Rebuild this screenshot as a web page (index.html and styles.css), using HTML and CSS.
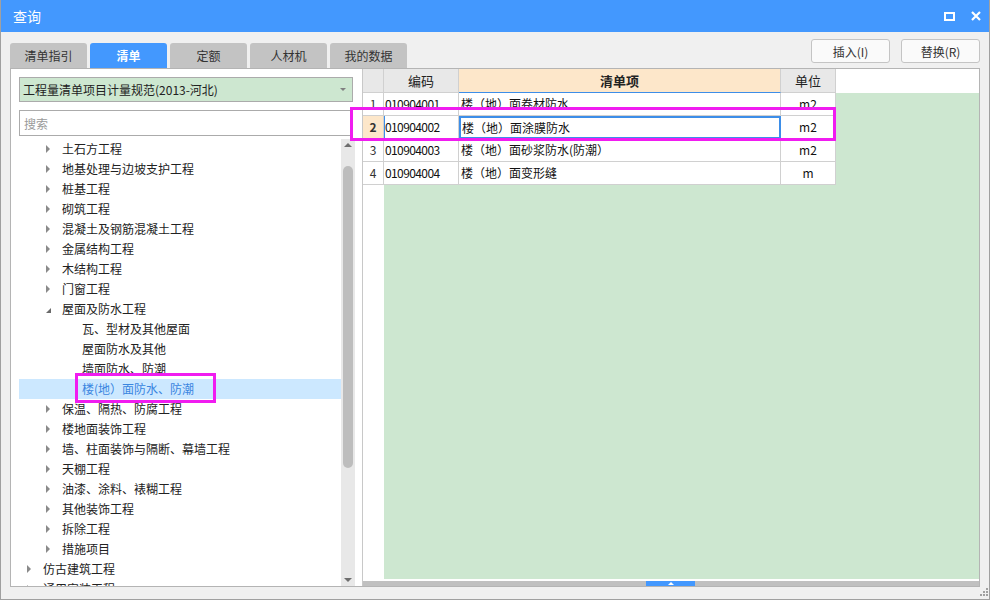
FILE: index.html
```html
<!DOCTYPE html>
<html lang="zh-CN">
<head>
    <meta charset="UTF-8">
    <title>查询</title>
    <link rel="stylesheet" href="styles.css">
</head>
<body>
    <div class="window">
        <div class="titlebar">
            <span class="title">查询</span>
            <div class="win-btns">
                <svg width="11" height="9" viewBox="0 0 11 9"><rect x="1" y="1" width="9" height="7" fill="none" stroke="#fff" stroke-width="2"/></svg>
                <svg width="10" height="10" viewBox="0 0 10 10"><path d="M1 1L9 9M9 1L1 9" stroke="#fff" stroke-width="2.2" fill="none"/></svg>
            </div>
        </div>

        <div class="content">
            <div class="toolbar">
                <div class="tabs">
                    <div class="tab">清单指引</div>
                    <div class="tab active">清单</div>
                    <div class="tab">定额</div>
                    <div class="tab">人材机</div>
                    <div class="tab">我的数据</div>
                </div>
                <div class="actions">
                    <button class="btn">插入(I)</button>
                    <button class="btn">替换(R)</button>
                </div>
            </div>

            <div class="panes">
                <div class="left-pane">
                    <div class="select">
                        <span>工程量清单项目计量规范(2013-河北)</span>
                        <i class="select-arrow"></i>
                    </div>
                    <input class="search" type="text" placeholder="搜索">
                    <div class="tree-box">
                        <ul class="tree">
                            <li class="node lv2"><i class="caret"></i>土石方工程</li>
                            <li class="node lv2"><i class="caret"></i>地基处理与边坡支护工程</li>
                            <li class="node lv2"><i class="caret"></i>桩基工程</li>
                            <li class="node lv2"><i class="caret"></i>砌筑工程</li>
                            <li class="node lv2"><i class="caret"></i>混凝土及钢筋混凝土工程</li>
                            <li class="node lv2"><i class="caret"></i>金属结构工程</li>
                            <li class="node lv2"><i class="caret"></i>木结构工程</li>
                            <li class="node lv2"><i class="caret"></i>门窗工程</li>
                            <li class="node lv2"><i class="caret open"></i>屋面及防水工程</li>
                            <li class="node lv3">瓦、型材及其他屋面</li>
                            <li class="node lv3">屋面防水及其他</li>
                            <li class="node lv3">墙面防水、防潮</li>
                            <li class="node lv3 selected">楼(地）面防水、防潮</li>
                            <li class="node lv2"><i class="caret"></i>保温、隔热、防腐工程</li>
                            <li class="node lv2"><i class="caret"></i>楼地面装饰工程</li>
                            <li class="node lv2"><i class="caret"></i>墙、柱面装饰与隔断、幕墙工程</li>
                            <li class="node lv2"><i class="caret"></i>天棚工程</li>
                            <li class="node lv2"><i class="caret"></i>油漆、涂料、裱糊工程</li>
                            <li class="node lv2"><i class="caret"></i>其他装饰工程</li>
                            <li class="node lv2"><i class="caret"></i>拆除工程</li>
                            <li class="node lv2"><i class="caret"></i>措施项目</li>
                            <li class="node lv1"><i class="caret"></i>仿古建筑工程</li>
                            <li class="node lv1"><i class="caret"></i>通用安装工程</li>
                        </ul>
                        <div class="vscroll">
                            <i class="arr-up"></i>
                            <div class="thumb-v"></div>
                            <i class="arr-down"></i>
                        </div>
                    </div>
                </div>

                <div class="right-pane">
                    <div class="grid-head">
                        <div class="hc w-num"></div>
                        <div class="hc w-code">编码</div>
                        <div class="hc w-name focus">清单项</div>
                        <div class="hc w-unit">单位</div>
                        <div class="head-fill"></div>
                    </div>
                    <div class="grid-body">
                        <div class="num-col">
                            <div class="num">1</div>
                            <div class="num cur">2</div>
                            <div class="num">3</div>
                            <div class="num">4</div>
                        </div>
                        <div class="data-col">
                            <div class="row">
                                <div class="cell w-code code">010904001</div>
                                <div class="cell w-name">楼（地）面卷材防水</div>
                                <div class="cell w-unit unit">m2</div>
                            </div>
                            <div class="row cur">
                                <div class="cell w-code code">010904002</div>
                                <div class="cell w-name">楼（地）面涂膜防水</div>
                                <div class="cell w-unit unit">m2</div>
                            </div>
                            <div class="row">
                                <div class="cell w-code code">010904003</div>
                                <div class="cell w-name">楼（地）面砂浆防水(防潮）</div>
                                <div class="cell w-unit unit">m2</div>
                            </div>
                            <div class="row">
                                <div class="cell w-code code">010904004</div>
                                <div class="cell w-name">楼（地）面变形缝</div>
                                <div class="cell w-unit unit">m</div>
                            </div>
                        </div>
                    </div>
                    <div class="hscroll">
                        <div class="thumb-h"><i></i></div>
                    </div>
                </div>
            </div>
        </div>

        <!-- annotation frames -->
        <div class="mark mark-row"></div>
        <div class="mark mark-tree"></div>

        <svg class="grip" width="8" height="8" viewBox="0 0 8 8">
            <rect x="6" y="0" width="2" height="2"/>
            <rect x="3" y="3" width="2" height="2"/>
            <rect x="6" y="3" width="2" height="2"/>
            <rect x="0" y="6" width="2" height="2"/>
            <rect x="3" y="6" width="2" height="2"/>
            <rect x="6" y="6" width="2" height="2"/>
        </svg>
    </div>
</body>
</html>
```

FILE: styles.css
```css
* {
    box-sizing: border-box;
    margin: 0;
    padding: 0;
}
body {
    font-family: "Noto Sans CJK SC", "Microsoft YaHei", sans-serif;
    font-size: 12px;
    color: #222;
    background-color: #ffffff;
}

.window {
    position: relative;
    width: 990px;
    height: 600px;
    border: 1px solid #a0a0a0;
    border-top: 0;
    background-color: #f0f0f0;
    display: flex;
    flex-direction: column;
}

/* title bar */
.titlebar {
    height: 32px;
    background-color: #4398fe;
    color: #ffffff;
    display: flex;
    align-items: center;
    justify-content: space-between;
    padding: 0 8px 0 12px;
}
.title {
    font-size: 14px;
}
.win-btns {
    display: flex;
    align-items: center;
    gap: 16px;
}
.win-btns svg {
    display: block;
}

.content {
    flex: 1;
    display: flex;
    flex-direction: column;
    padding: 0 9px 12px;
    min-height: 0;
}

/* tabs and buttons */
.toolbar {
    height: 36px;
    display: flex;
    justify-content: space-between;
}
.tabs {
    display: flex;
    align-items: flex-end;
    gap: 3px;
}
.tab {
    width: 77px;
    height: 25px;
    line-height: 25px;
    text-align: center;
    background-color: #c3c3c3;
    border-radius: 3px 3px 0 0;
    color: #333;
}
.tab.active {
    background-color: #4398fe;
    color: #ffffff;
    font-weight: bold;
}
.actions {
    display: flex;
    gap: 11px;
    padding-top: 7px;
}
.btn {
    width: 79px;
    height: 24px;
    border: 1px solid #c4c4c4;
    border-radius: 3px;
    background-color: #fafafa;
    font: inherit;
    color: #333;
}

.panes {
    flex: 1;
    display: flex;
    border: 1px solid #b4b4b4;
    background-color: #ffffff;
    min-height: 0;
}

/* left side */
.left-pane {
    width: 351px;
    display: flex;
    flex-direction: column;
    padding: 8px 7px 0 8px;
}
.select {
    height: 25px;
    margin-right: 2px;
    border: 1px solid #ababab;
    background-color: #cde7d0;
    display: flex;
    align-items: center;
    justify-content: space-between;
    padding: 0 6px 0 3px;
    color: #222;
}
.select-arrow {
    width: 0;
    height: 0;
    border-left: 3px solid transparent;
    border-right: 3px solid transparent;
    border-top: 3px solid #808080;
}
.search {
    height: 26px;
    margin-top: 8px;
    margin-right: 2px;
    border: 1px solid #ababab;
    padding: 0 4px;
    font: inherit;
    outline: none;
}
.search::placeholder {
    color: #9a9a9a;
}
.tree-box {
    flex: 1;
    display: flex;
    margin-top: 3px;
    min-height: 0;
}
.tree {
    flex: 1;
    list-style: none;
    overflow: hidden;
}
.node {
    height: 20px;
    line-height: 20px;
    white-space: nowrap;
    display: flex;
    align-items: center;
    color: #222;
}
.lv1 { padding-left: 8px; }
.lv2 { padding-left: 27px; }
.lv3 { padding-left: 63px; }
.caret {
    width: 0;
    height: 0;
    margin-right: 12px;
    border-top: 4px solid transparent;
    border-bottom: 4px solid transparent;
    border-left: 4px solid #8a8a8a;
}
.caret.open {
    width: 0;
    height: 0;
    margin-right: 11px;
    margin-top: 3px;
    border-top: 5px solid transparent;
    border-bottom: 0;
    border-left: 0;
    border-right: 5px solid #6a6a6a;
}
.node.selected {
    background-color: #cce8ff;
    color: #3a85df;
}
.vscroll {
    width: 14px;
    background-color: #e8e8e8;
    display: flex;
    flex-direction: column;
    align-items: center;
}
.arr-up, .arr-down {
    width: 0;
    height: 0;
    border-left: 4px solid transparent;
    border-right: 4px solid transparent;
}
.arr-up {
    margin-top: 4px;
    border-bottom: 4px solid #6e6e6e;
}
.arr-down {
    margin-top: auto;
    margin-bottom: 4px;
    border-top: 4px solid #6e6e6e;
}
.thumb-v {
    width: 10px;
    height: 302px;
    margin-top: 19px;
    border-radius: 5px;
    background-color: #bdbdbd;
}

/* right side grid */
.right-pane {
    flex: 1;
    display: flex;
    flex-direction: column;
    border-left: 1px solid #c8c8c8;
    min-width: 0;
}
.grid-head {
    display: flex;
    height: 24px;
}
.hc {
    height: 24px;
    line-height: 23px;
    text-align: center;
    background-color: #e8e8e8;
    border-right: 1px solid #d0d0d0;
    border-bottom: 1px solid #d0d0d0;
    color: #222;
    font-size: 13px;
}
.hc.focus {
    background-color: #fde7ca;
    font-weight: bold;
    border-bottom-color: #3d8ee8;
}
.head-fill {
    flex: 1;
}
.w-num { width: 21px; }
.w-code { width: 75px; }
.w-name { width: 322px; }
.w-unit { width: 55px; }

.grid-body {
    flex: 1;
    display: flex;
    min-height: 0;
}
.num-col {
    width: 21px;
}
.num {
    height: 23px;
    line-height: 22px;
    text-align: center;
    border-right: 1px solid #d0d0d0;
    border-bottom: 1px solid #d0d0d0;
    color: #333;
}
.num.cur {
    background-color: #fde7ca;
    font-weight: bold;
}
.data-col {
    flex: 1;
    background-color: #cde7d0;
}
.row {
    display: flex;
    width: 452px;
    height: 23px;
    background-color: #ffffff;
}
.cell {
    height: 23px;
    line-height: 22px;
    padding: 0 2px;
    white-space: nowrap;
    border-right: 1px solid #d0d0d0;
    border-bottom: 1px solid #d0d0d0;
    color: #111;
}
.cell.code {
    padding-left: 1px;
    letter-spacing: -0.6px;
}
.cell.unit {
    text-align: center;
}
.row.cur .code {
    border-left: 1px solid #3d8ee8;
    padding-left: 0;
}
.row.cur .w-name {
    border: 2px solid #3d8ee8;
    line-height: 19px;
    padding-left: 1px;
}

.hscroll {
    height: 5px;
    margin-top: 2px;
    background-color: #c0c0c0;
}
.thumb-h {
    width: 49px;
    height: 5px;
    margin-left: 283px;
    background-color: #4398fe;
    display: flex;
    justify-content: center;
    align-items: center;
}
.thumb-h i {
    width: 0;
    height: 0;
    border-left: 3px solid transparent;
    border-right: 3px solid transparent;
    border-bottom: 3px solid #ffffff;
}

/* magenta annotation boxes drawn over the screenshot */
.mark {
    position: absolute;
    border: 3px solid #f01cf0;
}
.mark-row {
    left: 349px;
    top: 107px;
    width: 486px;
    height: 34px;
}
.mark-tree {
    left: 74px;
    top: 373px;
    width: 141px;
    height: 30px;
}

.grip {
    position: absolute;
    right: 1px;
    bottom: 3px;
    fill: #a0a0a0;
}
```
